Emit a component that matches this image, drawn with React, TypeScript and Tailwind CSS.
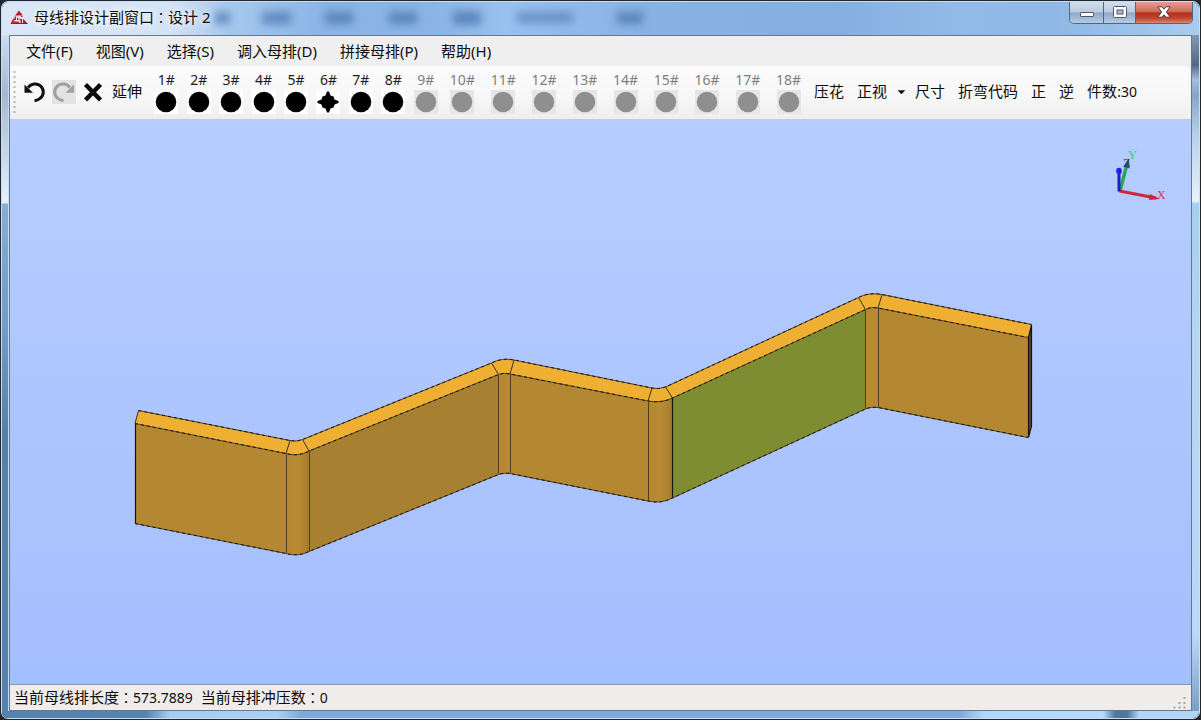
import React from "react";

const menus = ["文件(F)", "视图(V)", "选择(S)", "调入母排(D)", "拼接母排(P)", "帮助(H)"];

type Die = { label: string; shape: "round" | "star"; enabled: boolean };

const dies: Die[] = Array.from({ length: 18 }, (_, i) => ({
  label: `${i + 1}#`,
  shape: i === 5 ? "star" : "round",
  enabled: i < 8,
}));

function DieButton({ die }: { die: Die }) {
  return (
    <button
      type="button"
      disabled={!die.enabled}
      className="flex flex-col items-center text-[#1c1c1c] disabled:text-[#7e7e7e]"
    >
      <span className="text-sm leading-5">{die.label}</span>
      <svg
        viewBox="0 0 24 24"
        aria-hidden="true"
        className={die.enabled ? "size-6 bg-white" : "size-6 bg-[#e6e6e6]"}
      >
        {die.shape === "round" ? (
          <circle cx="12" cy="12" r="10.3" fill={die.enabled ? "#000" : "#8f8f8f"} />
        ) : (
          <path d="M11 1.500H13L14.500 5.500L17.500 6.500L18.500 9.500L22.500 11V13L18.500 14.500L17.500 17.500L14.500 18.500L13 22.500H11L9.500 18.500L6.500 17.500L5.500 14.500L1.500 13V11L5.500 9.500L6.500 6.500L9.500 5.500Z" fill="#000" />
        )}
      </svg>
    </button>
  );
}

function Colon() {
  return <span className="font-['Noto_Sans_CJK_TC',sans-serif] text-sm leading-none">：</span>;
}

function AppLogo() {
  return (
    <svg viewBox="0 0 18 16" className="h-4 w-[18px]" aria-hidden="true">
      <path d="M9 1.500L12.500 6H5.500Z" fill="#b8232b" />
      <path d="M5 6.500H12.500V8H7V11H9V9.500H13L17.500 14.500H10.500V11.500M5 6.500L4 11H7" fill="#a3262d" />
      <path d="M3.500 9L0.500 14.500H9V12.500H4.500Z" fill="#c22a31" />
      <path d="M6.500 7.500H11M6.500 7.500V11.500H9V9.500M10 9.500H15M12.500 9.500V14" stroke="#f5dfe4" strokeWidth="1" fill="none" />
      <path d="M1 14.500H17.500" stroke="#7c252c" strokeWidth="1" />
    </svg>
  );
}

function TitleBar() {
  return (
    <header className="relative flex h-[33px] shrink-0 items-start justify-between overflow-hidden bg-[linear-gradient(90deg,#d9e6f6_0%,#d3e3f6_14%,#a6c8ee_19%,#8ab4e6_27%,#8ab4e6_36%,#98c1ee_42%,#88b2e3_54%,#84afe0_70%,#93bbe8_80%,#8fb8e6_88%,#a9cbee_100%)]">
      <svg className="absolute inset-0 h-full w-full blur-[4px]" aria-hidden="true">
        <g fill="#305f99" opacity="0.55">
          <rect x="212" y="10" width="16" height="12" />
          <rect x="260" y="10" width="29" height="12" />
          <rect x="323" y="10" width="28" height="12" />
          <rect x="387" y="10" width="28" height="12" />
          <rect x="451" y="9" width="28" height="14" />
          <rect x="515" y="10" width="56" height="11" opacity="0.8" />
          <rect x="615" y="10" width="26" height="12" />
        </g>
      </svg>
      <div className="relative flex items-center gap-1.5 pt-[3px] pl-2">
        <AppLogo />
        <h1 className="text-[15px] leading-6 [text-shadow:0_0_6px_#fff,0_0_10px_#fff]">
          母线排设计副窗口<Colon />设计 2
        </h1>
      </div>
      <div className="relative mr-1.5 flex h-[22px] overflow-hidden rounded-b-[5px] border border-t-0 border-[#53667f]">
        <button type="button" aria-label="最小化" className="flex w-[34px] justify-center border-r border-[#53667f] bg-[linear-gradient(#d3deeb_0%,#b9cade_48%,#90a9c7_52%,#b4cbe5_100%)] pt-2.5">
          <span className="h-[5px] w-3.5 rounded-[1px] border border-[#535666] bg-white" />
        </button>
        <button type="button" aria-label="最大化" className="flex w-8 justify-center border-r border-[#53667f] bg-[linear-gradient(#d3deeb_0%,#b9cade_48%,#90a9c7_52%,#b4cbe5_100%)] pt-1">
          <svg viewBox="0 0 14 12" className="h-3 w-3.5" aria-hidden="true">
            <rect x="0.500" y="0.500" width="13" height="11" rx="1" fill="#fff" stroke="#535666" />
            <rect x="4" y="4" width="6" height="4" fill="#a9bdd5" stroke="#535666" />
          </svg>
        </button>
        <button type="button" aria-label="关闭" className="flex w-14 justify-center bg-[linear-gradient(#e0a091_0%,#cf6b58_46%,#b5301b_52%,#c24731_78%,#d9876c_100%)] pt-1">
          <svg viewBox="0 0 14 12" className="h-3 w-3.5" aria-hidden="true">
            <path d="M0.800 0.800H4.800L7 3.300L9.200 0.800H13.200L9.300 6L13.200 11.200H9.200L7 8.700L4.800 11.200H0.800L4.700 6Z" fill="#fff" stroke="#53414b" />
          </svg>
        </button>
      </div>
    </header>
  );
}

function Toolbar() {
  return (
    <div role="toolbar" className="flex h-[53px] shrink-0 items-center overflow-hidden rounded-tr-md bg-[linear-gradient(#fbfbfb,#f7f7f7_60%,#eeeeee)] pb-0.5 text-[15px] whitespace-nowrap">
      <svg viewBox="0 0 4 42" className="mr-[5px] ml-[3px] h-[42px] w-1 shrink-0" aria-hidden="true">
        <path d="M1.500 0V42" stroke="#b4b4b4" strokeWidth="2" strokeDasharray="2 3" />
      </svg>
      <button type="button" aria-label="撤销" className="mr-1.5">
        <svg viewBox="0 0 24 24" className="size-6" aria-hidden="true">
          <path d="M6 7.500C9 3.800 14.500 2.500 18.500 5.800C22.500 9.500 22 15 18.500 18C17 19.500 15 20.500 12.500 20.700" fill="none" stroke="#111" strokeWidth="3" />
          <path d="M2.500 4.500V12.800H11Z" fill="#111" />
        </svg>
      </button>
      <button type="button" aria-label="重做" disabled className="mr-[5px] bg-[#e3e3e3]">
        <svg viewBox="0 0 24 24" className="size-6" aria-hidden="true">
          <path d="M18 7.500C15 3.800 9.500 2.500 5.500 5.800C1.500 9.500 2 15 5.500 18C7 19.500 9 20.500 11.500 20.700" fill="none" stroke="#a0a0a0" strokeWidth="3" />
          <path d="M22 4.500V12.800H13.500Z" fill="#a0a0a0" />
        </svg>
      </button>
      <button type="button" aria-label="删除" className="mr-[7px]">
        <svg viewBox="0 0 24 24" className="size-6" aria-hidden="true">
          <path d="M4.500 4.500L19.500 20M19.500 4.500L4.500 20" stroke="#0a0a0a" strokeWidth="4.500" />
        </svg>
      </button>
      <button type="button" className="mr-2">延伸</button>
      <div className="grid w-[292px] shrink-0 grid-cols-9">
        {dies.slice(0, 9).map((d) => <DieButton key={d.label} die={d} />)}
      </div>
      <div className="grid w-[367px] shrink-0 grid-cols-9">
        {dies.slice(9).map((d) => <DieButton key={d.label} die={d} />)}
      </div>
      <div className="ml-[5px] flex items-center gap-[13px]">
        <button type="button">压花</button>
        <div className="flex items-center">
          <button type="button">正视</button>
          <button type="button" aria-label="选择视图" className="px-2">
            <svg viewBox="0 0 14 8" className="h-2 w-3" aria-hidden="true">
              <path d="M3 2H12L7.500 6.500Z" fill="#111" />
            </svg>
          </button>
          <button type="button">尺寸</button>
        </div>
        <button type="button">折弯代码</button>
        <button type="button">正</button>
        <button type="button">逆</button>
        <span>件数<span className="text-sm">:30</span></span>
      </div>
    </div>
  );
}

function Busbar() {
  return (
    <svg viewBox="10 119 1181 565" className="h-full w-full" role="img" aria-label="母线排三维视图">
      <defs>
        <linearGradient id="bend" x1="0" x2="1" y1="0" y2="0">
          <stop offset="0" stopColor="#b48832" />
          <stop offset="0.55" stopColor="#b88b33" />
          <stop offset="1" stopColor="#a47a2e" />
        </linearGradient>
      </defs>

      <path d="M135 423.500L286 453.500V553.500L135 523.500Z" fill="#b48832" />
      <path d="M286 453.500Q298 457 309 451V551.500Q298 557 286 553.500Z" fill="url(#bend)" />
      <path d="M309 451L498.500 374.500V474.500L309 551.500Z" fill="#a88031" />
      <path d="M498.500 374.500Q504 372.500 510 374V473.500Q504 472.500 498.500 474.500Z" fill="#b68931" />
      <path d="M510 374L648 401V501L510 473.500Z" fill="#b48832" />
      <path d="M648 401Q661 403.500 672.500 398V498Q661 504 648 501Z" fill="url(#bend)" />
      <path d="M672.500 398L865.500 309.500V409L672.500 498Z" fill="#7e8c32" />
      <path d="M865.500 309.500Q871 306.500 878 308V407.500Q871 406.500 865.500 409Z" fill="#b68933" />
      <path d="M878 308L1028 337.500V437.500L878 407.500Z" fill="#b48832" />
      <path d="M1028 337.500L1031.500 325V426L1028 437.500Z" fill="#50452b" />
      <path d="M135 423.500L138.500 410.500L290 440.500Q296 442 302.500 439.500L491.500 363Q502 357.500 514 360L652 388Q658 389.500 665.500 387L858.500 297.500Q869 292 882 294.500L1031.500 324.500L1028 337.500L878 308Q871 306.500 865.500 309.500L672.500 398Q661 403.500 648 401L510 374Q504 372.500 498.500 374.500L309 451Q298 457 286 453.500Z" fill="#efaf32" />

      <g fill="none" stroke="#574426" strokeWidth="1">
        <path d="M138.500 410.500L290 440.500Q296 442 302.500 439.500L491.500 363Q502 357.500 514 360L652 388Q658 389.500 665.500 387L858.500 297.500Q869 292 882 294.500L1031.500 324.500" />
        <path d="M135 423.500L286 453.500Q298 457 309 451L498.500 374.500Q504 372.500 510 374L648 401Q661 403.500 672.500 398L865.500 309.500Q871 306.500 878 308L1028 337.500" />
        <path d="M135 523.500L286 553.500Q298 557 309 551.500L498.500 474.500Q504 472.500 510 473.500L648 501Q661 504 672.500 498L865.500 409Q871 406.500 878 407.500L1028 437.500" />
      </g>
      <g fill="none" stroke="#15130f" strokeWidth="1" strokeDasharray="3 3">
        <path d="M138.500 410.500L290 440.500Q296 442 302.500 439.500L491.500 363Q502 357.500 514 360L652 388Q658 389.500 665.500 387L858.500 297.500Q869 292 882 294.500L1031.500 324.500" />
        <path d="M135 423.500L286 453.500Q298 457 309 451L498.500 374.500Q504 372.500 510 374L648 401Q661 403.500 672.500 398L865.500 309.500Q871 306.500 878 308L1028 337.500" />
        <path d="M135 523.500L286 553.500Q298 557 309 551.500L498.500 474.500Q504 472.500 510 473.500L648 501Q661 504 672.500 498L865.500 409Q871 406.500 878 407.500L1028 437.500" />
      </g>
      <g fill="none" stroke="#3c2f17" strokeWidth="1">
        <path d="M138.500 410.500L135 423.500M290 440.500L286 453.500M302.500 439.500L309 451M491.500 363L498.500 374.500M514 360L510 374M652 388L648 401M665.500 387L672.500 398M858.500 297.500L865.500 309.500M882 294.500L878 308" />
        <path d="M286.500 454V553M309.500 451V551M498.500 375V474M510.500 374V473M648.500 401V501M865.500 310V409M878.500 308V407" stroke="#4f3d1b" />
        <path d="M135.500 424V523M672.500 398V498M1028.500 338V437M1031.500 325V426M1031.500 325L1028.500 337.500M1031.500 426L1028.500 437.500" stroke="#17140d" strokeWidth="1.200" />
      </g>

      <g>
        <path d="M1120 191L1126.500 166" stroke="#28a657" strokeWidth="3.500" />
        <path d="M1129 158.500L1123.500 166.500L1129.500 168.500Z" fill="#17633f" />
        <path d="M1119.500 191L1156 198" stroke="#d6223b" strokeWidth="3" />
        <path d="M1150 194L1160 199L1149 200Z" fill="#d6223b" />
        <path d="M1119 191.500V171" stroke="#2020b8" strokeWidth="3" />
        <ellipse cx="1119" cy="171" rx="2.800" ry="3.200" fill="#2020e0" />
        <g fontSize="12" className="font-['Liberation_Serif',serif]">
          <text x="1128" y="159" fill="#2ed45c">Y</text>
          <text x="1157" y="199" fill="#dc3350">X</text>
          <text x="1123" y="167" fill="#2929c8">Z</text>
        </g>
      </g>
    </svg>
  );
}

export default function App() {
  return (
    <div className="flex h-screen flex-col bg-[#24262e] p-px font-['Noto_Sans','Noto_Sans_CJK_SC',sans-serif] text-[#0c0c0c]">
      <div className="flex min-h-0 flex-1 flex-col overflow-hidden rounded-[7px] border border-[#c9dff5]">
        <TitleBar />
        <div className="flex min-h-0 flex-1">
          <div className="w-[7px] shrink-0 bg-[linear-gradient(#c9dcf2_0px,#a4b8cf_60px,#e3effb_164px,#e3effb_168px,#86add4_169px,#6e9bc8_300px,#5580ae_400px,#5781ae_100%)]" />
          <div className="flex min-w-0 flex-1 flex-col border border-[#66788e] bg-[#efefef] outline outline-[#c4dbf3]">
            <nav aria-label="主菜单" className="flex h-[30px] shrink-0 items-center gap-[23px] bg-[#efefef] pl-4 text-[15px]">
              {menus.map((m) => (
                <button key={m} type="button" className="whitespace-nowrap">{m}</button>
              ))}
            </nav>
            <Toolbar />
            <main className="min-h-0 flex-1 bg-[linear-gradient(#b7cdff,#a4bfff)]">
              <Busbar />
            </main>
            <footer className="flex h-[26px] shrink-0 items-center justify-between border-t border-[#8e98ac] bg-[#f0eceb] pr-1 pl-1 text-[15px]">
              <div className="flex gap-2">
                <span>当前母线排长度<Colon /><span className="text-sm">573.7889</span></span>
                <span>当前母排冲压数<Colon /><span className="text-sm">0</span></span>
              </div>
              <svg viewBox="0 0 14 14" className="size-3.5 self-end" aria-hidden="true">
                <path d="M10.500 1H12.500V3H10.500ZM5.500 6H7.500V8H5.500ZM10.500 6H12.500V8H10.500ZM0.500 10.500H2.500V12.500H0.500ZM5.500 10.500H7.500V12.500H5.500ZM10.500 10.500H12.500V12.500H10.500Z" fill="#a7a4a4" />
              </svg>
            </footer>
          </div>
          <div className="w-[7px] shrink-0 bg-[linear-gradient(#8199b5_0px,#536a86_30px,#a3bfdd_45px,#8aa6c4_60px,#b7d0ea_100px,#e9f3fc_166px,#a6cff0_169px,#b5d5f3_300px,#b9d9f6_600px,#7c9fc4_100%)]" />
        </div>
        <div className="h-[7px] shrink-0 bg-[linear-gradient(90deg,#5781ae_0%,#5781ae_12%,#a5cdf2_14%,#a9cff3_23%,#7ea9dc_25%,#7ea9dc_80%,#b1d7f8_82%,#b5daf9_92%,#50769c_93%,#50769c_94%,#b1d5f4_95%,#b1d5f4_100%)]" />
      </div>
    </div>
  );
}
